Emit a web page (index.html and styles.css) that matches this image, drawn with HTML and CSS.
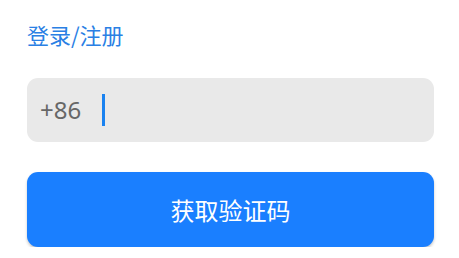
FILE: index.html
```html
<!DOCTYPE html>
<html lang="zh-CN">
<head>
<meta charset="utf-8">
<link rel="stylesheet" href="styles.css">
</head>
<body>
<div class="page">
  <div class="title">登录/注册</div>
  <div class="phone-field">
    <span class="prefix">+86</span>
    <span class="caret"></span>
  </div>
  <button class="submit">获取验证码</button>
</div>
</body>
</html>
```
FILE: styles.css
```css
html, body {
  margin: 0;
  padding: 0;
  background: #ffffff;
}
.page {
  width: 407px;
  margin-left: 27px;
  padding-top: 23px;
  display: flex;
  flex-direction: column;
  font-family: "Noto Sans", "Noto Sans CJK SC", sans-serif;
}
.title {
  font-family: "Noto Sans CJK SC", sans-serif;
  font-size: 22px;
  line-height: 22px;
  color: #2a80e4;
}
.phone-field {
  margin-top: 33px;
  height: 64px;
  background: #e9e9e9;
  border-radius: 11px;
  display: flex;
  align-items: center;
  padding-left: 13px;
}
.prefix {
  font-family: "Noto Sans", sans-serif;
  font-size: 24px;
  color: #676767;
  line-height: 1;
}
.caret {
  width: 3px;
  height: 32px;
  margin-left: 21px;
  background: #1a82f0;
}
.submit {
  margin-top: 30px;
  height: 75px;
  border: none;
  border-radius: 11px;
  background: #1a7fff;
  color: #ffffff;
  font-family: "Noto Sans CJK SC", sans-serif;
  font-size: 24px;
  box-shadow: 0 2px 3px rgba(0, 0, 0, 0.22);
  padding: 0;
}
```
